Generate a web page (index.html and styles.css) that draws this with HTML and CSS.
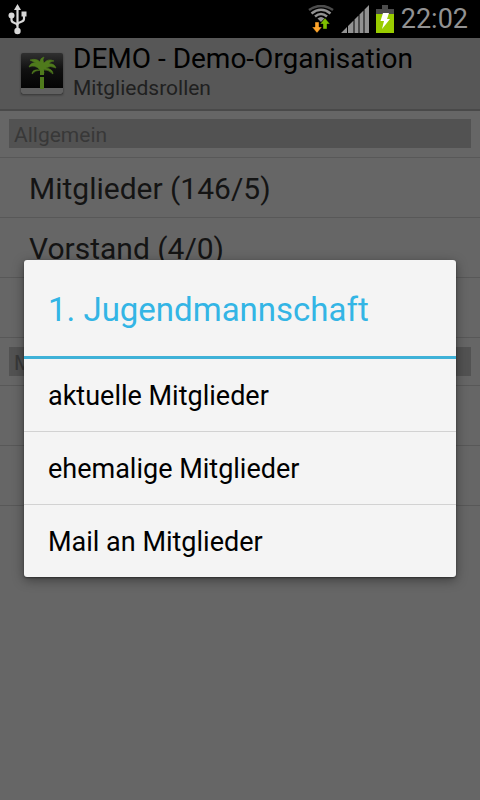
FILE: index.html
```html
<!DOCTYPE html>
<html lang="de">
<head>
<meta charset="utf-8">
<meta name="viewport" content="width=device-width, initial-scale=1">
<title>Mitgliedsrollen</title>
<link rel="stylesheet" href="styles.css">
</head>
<body>
<div class="status">
  <svg class="usb" width="20" height="32" viewBox="0 0 20 32" fill="#d8d8d8" stroke="#d8d8d8">
    <path d="M9.500 0 L13 6 H6z" stroke="none"/>
    <path d="M9.500 5V28M3.500 12V16C3.500 20 9.500 18 9.500 22M16 10V15C16 19 9.500 17 9.500 21" fill="none" stroke-width="2.200"/>
    <circle cx="3.500" cy="11.500" r="3" stroke="none"/>
    <path d="M13.500 7.500h5v5h-5z" stroke="none"/>
    <circle cx="9.500" cy="27" r="3.200" stroke="none"/>
  </svg>
  <div class="tray">
    <svg width="26" height="28" viewBox="0 0 26 28">
      <g fill="none" stroke-width="2.600">
        <path d="M1 5Q13-3 25 5" stroke="#4c4c4c"/>
        <path d="M3.500 8.500Q13 1 22.500 8.500" stroke="#929292"/>
        <path d="M7 11.500Q13 6.500 19 11.500" stroke="#929292"/>
      </g>
      <path d="M9.500 13.500Q13 10.500 16.500 13.500L13 17z" fill="#929292"/>
      <path d="M7 17h4v5h3l-5 6-5-6h3z" fill="#ffa52b" stroke="#000" stroke-width=".4"/>
      <path d="M15 24h4v-5h3l-5-6-5 6h3z" fill="#7fbf00" stroke="#000" stroke-width=".4"/>
    </svg>
    <svg width="28" height="28" viewBox="0 0 28 28" fill="#929292">
      <path d="M0 28L6 22V28zM7 28V21L12.500 15.500V28zM13.500 28V14.500L17.500 10.500V28zM18.500 28V9.500L22.500 5.500V28zM23.500 28V4.500L28 0V28z"/>
    </svg>
    <svg width="18" height="28" viewBox="0 0 18 28">
      <path d="M6 0h6v4h6v8H0V4h6z" fill="#4c4c4c"/>
      <path d="M0 9h18v19H0z" fill="#99cc00"/>
      <path d="M7 8h6l-2 6h3L6 24l2-8H4.500z" fill="#fff"/>
    </svg>
    <span class="clock">22:02</span>
  </div>
</div>
<div class="screen">
  <header class="bar">
    <svg class="logo" width="44" height="44" viewBox="0 0 44 44">
      <defs><linearGradient id="g" x1="0" y1="0" x2="0" y2="1"><stop offset="0" stop-color="#303030"/><stop offset=".4" stop-color="#101010"/><stop offset="1" stop-color="#000"/></linearGradient></defs>
      <rect x="1" y="1" width="42" height="41" rx="2" fill="url(#g)"/>
      <path d="M1 36H43V40Q43 42 41 42H3Q1 42 1 40z" fill="#606060"/>
      <g fill="#4f7a1c">
        <path d="M20 18Q15 12 9 15Q11 10 16 11L10 8Q17 6 20 10Q20 6 24 5Q22 8 24 11Q28 6 34 9Q30 9 29 12Q34 11 36 16Q30 13 26 16Q33 17 33 22Q28 17 23 18Q25 21 23 23Q22 19 21 18Q15 18 12 22Q12 17 20 18z" stroke="#4f7a1c" stroke-width=".6"/>
        <path d="M20 18h4v5h-4zM20 25h4v12h-4z"/>
      </g>
    </svg>
    <div>
      <h1>DEMO - Demo-Organisation</h1>
      <p>Mitgliedsrollen</p>
    </div>
  </header>
  <main>
    <section>
      <h2>Allgemein</h2>
      <ul>
        <li>Mitglieder (146/5)</li>
        <li>Vorstand (4/0)</li>
        <li></li>
      </ul>
    </section>
    <section>
      <h2>M</h2>
      <ul>
        <li></li>
        <li></li>
      </ul>
    </section>
  </main>
  <div class="shade">
    <div class="dialog" role="dialog" aria-labelledby="title">
      <h2 id="title">1. Jugendmannschaft</h2>
      <button type="button">aktuelle Mitglieder</button>
      <button type="button">ehemalige Mitglieder</button>
      <button type="button">Mail an Mitglieder</button>
    </div>
  </div>
</div>
</body>
</html>
```
FILE: styles.css
```css
* { box-sizing: border-box; margin: 0; padding: 0; }
body {
  min-height: 100vh;
  display: flex;
  flex-direction: column;
  background: #666;
  font-family: Roboto, "Noto Sans", sans-serif;
}
.status {
  height: 38px;
  padding: 0 12px 0 8px;
  display: flex;
  justify-content: space-between;
  background: #000;
}
.usb { margin-top: 4px; }
.tray { display: flex; align-items: center; gap: 7px; }
.clock { color: #929292; font-size: 27px; line-height: 38px; }
.screen { position: relative; flex: 1; }
.bar {
  height: 73px;
  padding: 4px 20px 0;
  display: flex;
  gap: 9px;
  background: #575757;
  border-bottom: 2px solid #494949;
}
.logo { margin-top: 10px; filter: drop-shadow(0 1px 1px #333); }
.bar h1 { font-size: 28px; line-height: 34px; font-weight: 400; color: #000; }
.bar p { font-size: 21px; line-height: 24px; color: #202020; }
section h2 {
  height: 29px;
  margin: 8px 9px 9px;
  padding-left: 5px;
  background: #525252;
  color: #383838;
  font-size: 21px;
  line-height: 32px;
  font-weight: 400;
}
section + section h2 { margin-top: 9px; }
section ul { list-style: none; border-top: 1px solid #585858; }
section li {
  height: 60px;
  padding-left: 29px;
  border-bottom: 1px solid #585858;
  color: #141414;
  font-size: 30px;
  line-height: 61px;
}
.shade {
  position: absolute;
  inset: 0;
  padding: 0 24px 2px;
  display: flex;
  align-items: center;
}
.dialog {
  width: 100%;
  border-radius: 3px;
  background: #f4f4f4;
  box-shadow: 0 3px 12px rgba(0, 0, 0, .4), 0 1px 2px rgba(0, 0, 0, .4);
}
.dialog h2 {
  height: 99px;
  padding-left: 24px;
  border-bottom: 3px solid #3fb2d8;
  color: #33b5e5;
  font-size: 33px;
  line-height: 100px;
  font-weight: 400;
}
.dialog button {
  display: block;
  width: 100%;
  height: 73px;
  padding: 0 24px;
  border: 0;
  border-bottom: 1px solid #d2d2d2;
  background: none;
  color: #000;
  font: 27px/74px Roboto, "Noto Sans", sans-serif;
  text-align: left;
}
.dialog button:last-child { height: 72px; border-bottom: 0; }
```
